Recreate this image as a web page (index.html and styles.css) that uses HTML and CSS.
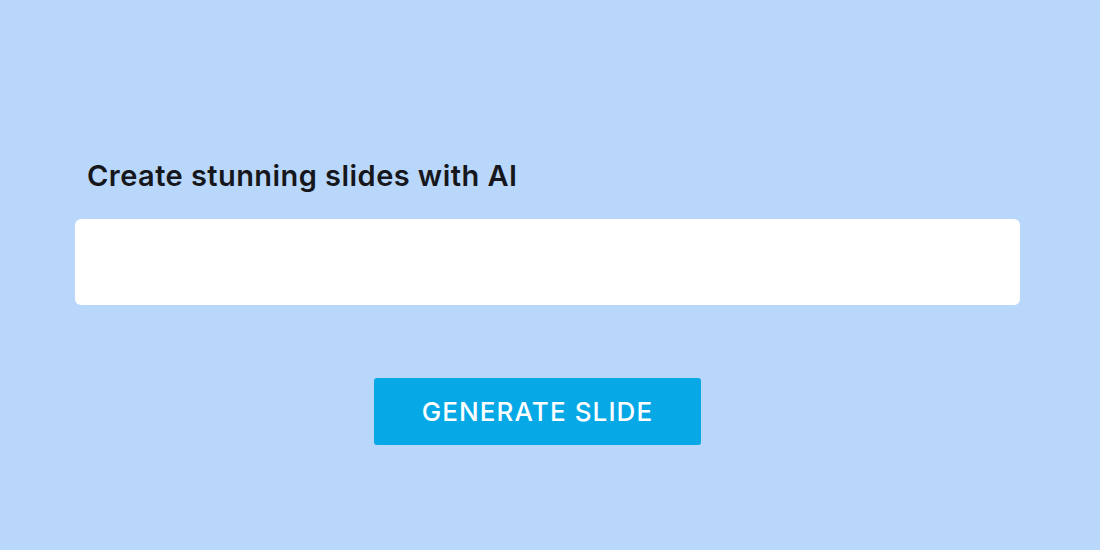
FILE: index.html
```html
<!DOCTYPE html>
<html>
<head>
<meta charset="utf-8">
<link rel="stylesheet" href="styles.css">
</head>
<body>
<main class="page">
  <h1 class="title">Create stunning slides with AI</h1>
  <div class="field"></div>
  <div class="actions">
    <button class="btn">GENERATE SLIDE</button>
  </div>
</main>
</body>
</html>
```

FILE: styles.css
```css
html, body {
  margin: 0;
  padding: 0;
  background: #b9d7fb;
  height: 100%;
}
.page {
  padding: 158px 80px 0 75px;
  font-family: Inter, "Liberation Sans", sans-serif;
}
.title {
  margin: 0 0 0 12px;
  font-size: 29px;
  line-height: 36px;
  font-weight: 600;
  letter-spacing: 0.45px;
  color: #16171c;
}
.field {
  margin-top: 25px;
  height: 86px;
  width: 945px;
  background: #ffffff;
  border-radius: 6px;
}
.actions {
  margin-top: 73px;
  width: 925px;
  padding-right: 20px;
  display: flex;
  justify-content: center;
}
.btn {
  width: 327px;
  height: 67px;
  border: none;
  border-radius: 3px;
  background: #07a8e6;
  color: #ffffff;
  font-family: Inter, "Liberation Sans", sans-serif;
  font-size: 26px;
  font-weight: 500;
  letter-spacing: 1.1px;
}
```
